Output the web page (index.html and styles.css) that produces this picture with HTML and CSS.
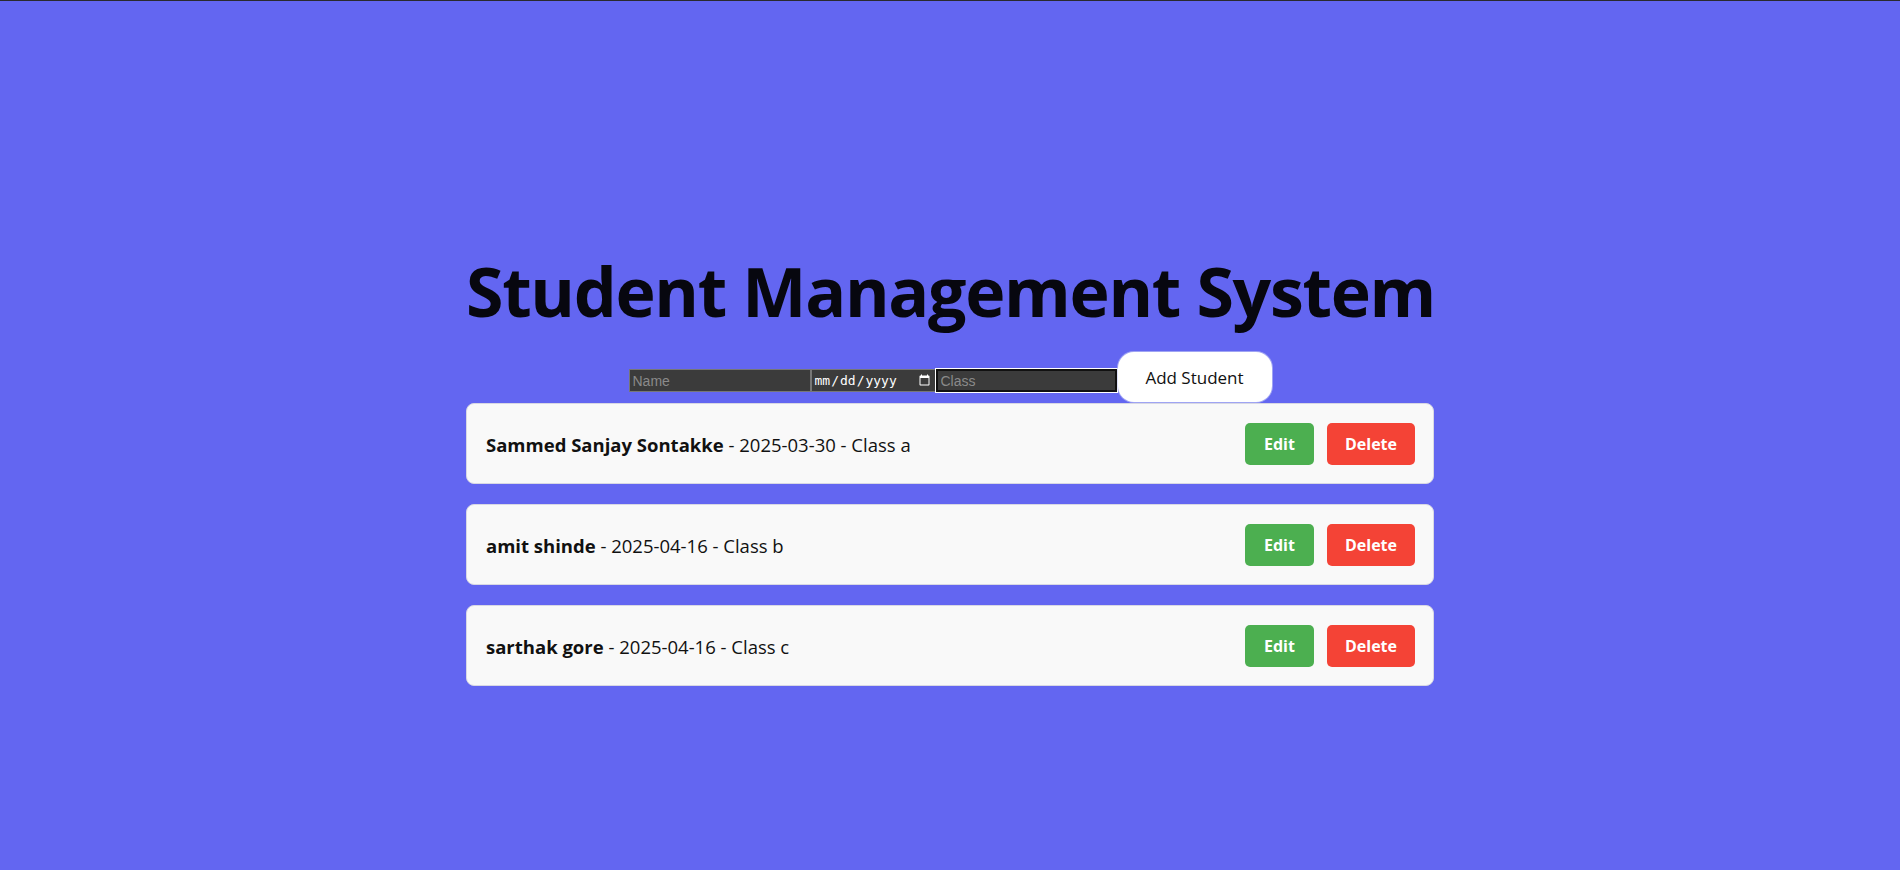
FILE: index.html
```html
<!DOCTYPE html>
<html lang="en">
<head>
<meta charset="utf-8">
<title>Student Management System</title>
<link rel="stylesheet" href="styles.css">
</head>
<body>
  <main class="app">
    <h1 class="title">Student Management System</h1>
    <form class="add-form">
      <input class="field field-name" type="text" placeholder="Name"><input class="field field-date" type="date"><input class="field field-class is-focused" type="text" placeholder="Class"><button class="add-btn" type="button">Add Student</button>
    </form>
    <ul class="student-list">
      <li class="card">
        <span class="card-text"><strong>Sammed Sanjay Sontakke</strong> - 2025-03-30 - Class a</span>
        <span class="actions"><button class="btn btn-edit" type="button">Edit</button><button class="btn btn-delete" type="button">Delete</button></span>
      </li>
      <li class="card">
        <span class="card-text"><strong>amit shinde</strong> - 2025-04-16 - Class b</span>
        <span class="actions"><button class="btn btn-edit" type="button">Edit</button><button class="btn btn-delete" type="button">Delete</button></span>
      </li>
      <li class="card">
        <span class="card-text"><strong>sarthak gore</strong> - 2025-04-16 - Class c</span>
        <span class="actions"><button class="btn btn-edit" type="button">Edit</button><button class="btn btn-delete" type="button">Delete</button></span>
      </li>
    </ul>
  </main>
</body>
</html>
```
FILE: styles.css
```css
html, body {
  margin: 0;
  padding: 0;
}

body {
  background: #6366f1;
  border-top: 1px solid #2a2a2e;
  min-height: calc(100vh - 1px);
  font-family: "Open Sans", "Noto Sans", sans-serif;
  color: #111;
}

.app {
  width: 968px;
  margin: 0 auto;
  padding-top: 250px;
}

.title {
  margin: 0;
  font-size: 68px;
  line-height: 80px;
  font-weight: 700;
  letter-spacing: -1.3px;
  text-align: center;
  color: #07070f;
  white-space: nowrap;
}

.add-form {
  margin-top: 21px;
  display: flex;
  justify-content: center;
  align-items: flex-start;
  height: 50px;
}

.field {
  color-scheme: dark;
  box-sizing: border-box;
  height: 23px;
  margin: 17px 0 0;
  padding: 1px 3px;
  background: #3b3b3b;
  border: 1px solid #777;
  color: #fff;
  font-family: "Liberation Sans", Arial, sans-serif;
  font-size: 14px;
}

.field::placeholder {
  color: #8a8a8a;
}

.field-name,
.field-class {
  width: 182px;
}

.field-date {
  width: 125px;
  font-family: "DejaVu Sans Mono", monospace;
  font-size: 13px;
  padding: 1px 2px;
}

.field.is-focused {
  border: 2px solid #111;
  outline: 1px solid #fff;
  width: 181px;
}

.add-btn {
  margin-left: 1px;
  width: 154px;
  height: 50px;
  border: none;
  border-radius: 16px;
  background: #fff;
  color: #111;
  font-family: "Open Sans", "Noto Sans", sans-serif;
  font-size: 17px;
  font-weight: 500;
  box-shadow: 0 0 0 1px rgba(200, 205, 245, 0.6);
}

.student-list {
  list-style: none;
  margin: 1px 0 0;
  padding: 0;
}

.card {
  display: flex;
  justify-content: space-between;
  align-items: center;
  background: #f9f9f9;
  border: 1px solid #d8d8e4;
  border-radius: 8px;
  padding: 19px 18px 18px 19px;
  margin-bottom: 20px;
  font-size: 18.5px;
}

.card-text strong {
  font-weight: 700;
}

.actions {
  display: flex;
  gap: 13px;
}

.btn {
  height: 42px;
  border: none;
  border-radius: 5px;
  color: #fff;
  font-family: "Open Sans", "Noto Sans", sans-serif;
  font-size: 16px;
  font-weight: 700;
  padding: 0;
}

.btn-edit {
  width: 69px;
  background: #4caf50;
}

.btn-delete {
  width: 88px;
  background: #f44336;
}
```
